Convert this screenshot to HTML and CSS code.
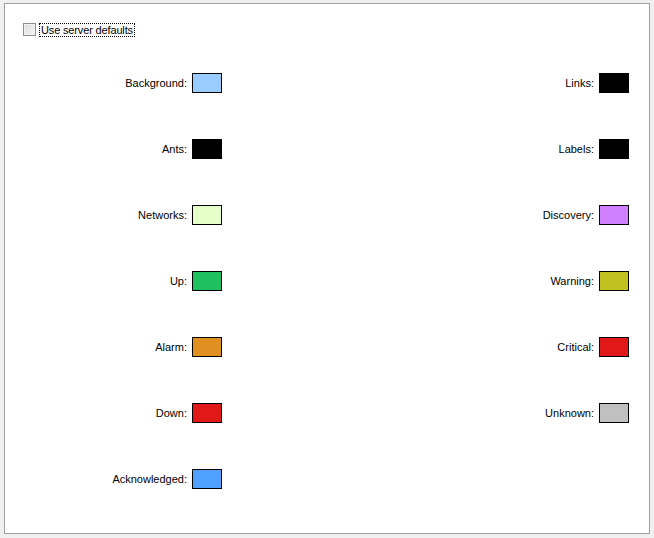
FILE: index.html
```html
<!DOCTYPE html>
<html>
<head>
<meta charset="utf-8">
<link rel="stylesheet" href="styles.css">
</head>
<body>
<div class="panel">
  <label class="check-row">
    <span class="checkbox"></span>
    <span class="check-label">Use server defaults</span>
  </label>
  <div class="grid">
    <div class="cell"><span class="lbl">Background:</span><span class="swatch c-bg"></span></div>
    <div class="cell"><span class="lbl">Links:</span><span class="swatch c-black"></span></div>
    <div class="cell"><span class="lbl">Ants:</span><span class="swatch c-black"></span></div>
    <div class="cell"><span class="lbl">Labels:</span><span class="swatch c-black"></span></div>
    <div class="cell"><span class="lbl">Networks:</span><span class="swatch c-net"></span></div>
    <div class="cell"><span class="lbl">Discovery:</span><span class="swatch c-disc"></span></div>
    <div class="cell"><span class="lbl">Up:</span><span class="swatch c-up"></span></div>
    <div class="cell"><span class="lbl">Warning:</span><span class="swatch c-warn"></span></div>
    <div class="cell"><span class="lbl">Alarm:</span><span class="swatch c-alarm"></span></div>
    <div class="cell"><span class="lbl">Critical:</span><span class="swatch c-red"></span></div>
    <div class="cell"><span class="lbl">Down:</span><span class="swatch c-red"></span></div>
    <div class="cell"><span class="lbl">Unknown:</span><span class="swatch c-unk"></span></div>
    <div class="cell"><span class="lbl">Acknowledged:</span><span class="swatch c-ack"></span></div>
  </div>
</div>
</body>
</html>
```
FILE: styles.css
```css
html, body {
  margin: 0;
  padding: 0;
  background: #f0f0f0;
}
body {
  font-family: "Liberation Sans", Arial, sans-serif;
  font-size: 11px;
  color: #000;
}
.panel {
  box-sizing: border-box;
  margin: 3px 0 0 4px;
  width: 646px;
  height: 531px;
  background: #fff;
  border: 1px solid #a0a0a0;
  padding: 18px 20px 0 18px;
}
.check-row {
  display: flex;
  align-items: center;
  height: 15px;
}
.checkbox {
  box-sizing: border-box;
  width: 13px;
  height: 13px;
  border: 1px solid #8e8f8f;
  background: linear-gradient(135deg, #dcdcdc, #f7f7f7);
  box-shadow: inset 0 0 0 1px #f2f2f2;
  margin-right: 3px;
}
.check-label {
  box-sizing: border-box;
  height: 14px;
  line-height: 12px;
  padding: 0 1px;
  border: 1px dotted #000;
  letter-spacing: -0.15px;
}
.grid {
  display: grid;
  grid-template-columns: 199px 1fr;
  grid-auto-rows: 20px;
  row-gap: 46px;
  margin-top: 36px;
}
.cell {
  display: flex;
  justify-content: flex-end;
  align-items: center;
  gap: 5px;
}
.lbl {
  line-height: 13px;
}
.swatch {
  box-sizing: border-box;
  width: 30px;
  height: 20px;
  border: 1px solid #000;
}
.c-bg { background: #99ccff; }
.c-black { background: #000; }
.c-net { background: #e6ffc8; }
.c-disc { background: #d080ff; }
.c-up { background: #1fc060; }
.c-warn { background: #c0c020; }
.c-alarm { background: #e09020; }
.c-red { background: #e01818; }
.c-unk { background: #c0c0c0; }
.c-ack { background: #50a0ff; }
```
